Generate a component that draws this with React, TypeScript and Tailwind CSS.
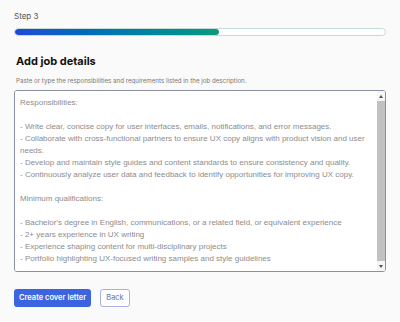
import { useState } from 'react';

const jobText = `Responsibilities:

- Write clear, concise copy for user interfaces, emails, notifications, and error messages.
- Collaborate with cross-functional partners to ensure UX copy aligns with product vision and user needs.
- Develop and maintain style guides and content standards to ensure consistency and quality.
- Continuously analyze user data and feedback to identify opportunities for improving UX copy.

Minimum qualifications:

- Bachelor's degree in English, communications, or a related field, or equivalent experience
- 2+ years experience in UX writing
- Experience shaping content for multi-disciplinary projects
- Portfolio highlighting UX-focused writing samples and style guidelines`;

function ProgressBar({ percent }: { percent: number }) {
  return (
    <div className="h-[8px] w-full rounded-full border border-[#c5dcd6] bg-white overflow-hidden">
      <div
        className="h-full rounded-full bg-gradient-to-r from-[#2146d8] to-[#0f9a7c]"
        style={{ width: `${percent}%` }}
      />
    </div>
  );
}

// classic scrollbar drawn over the textarea's right edge
function FakeScrollbar() {
  return (
    <div className="absolute right-0 top-0 bottom-0 flex w-[8px] flex-col bg-[#f5f5f5]">
      <div className="flex h-[10px] items-center justify-center">
        <div className="h-0 w-0 border-x-[2.5px] border-b-[3px] border-x-transparent border-b-[#505050]" />
      </div>
      <div className="flex-1 bg-[#c1c1c1]" />
      <div className="flex h-[10px] items-center justify-center">
        <div className="h-0 w-0 border-x-[2.5px] border-t-[3px] border-x-transparent border-t-[#505050]" />
      </div>
    </div>
  );
}

export default function App() {
  const [details, setDetails] = useState(jobText);

  return (
    <div className="min-h-[322px] w-[400px] bg-[#fafafa] px-[14px] pt-[11px] font-['Inter',sans-serif]">
      <p className="text-[8px] leading-[10px] text-[#555]">Step 3</p>

      <div className="mt-[7px]">
        <ProgressBar percent={55} />
      </div>

      <h1 className="mt-[18px] pl-[2px] text-[11px] font-bold leading-[14px] text-[#111]">
        Add job details
      </h1>
      <p className="mt-[8px] pl-[2px] text-[6.2px] leading-[9px] text-[#777]">
        Paste or type the responsibilities and requirements listed in the job description.
      </p>

      <div className="relative mt-[5px] h-[182px] overflow-hidden rounded-[3px] border border-[#8b90a0] bg-white">
        <textarea
          value={details}
          onChange={(e) => setDetails(e.target.value)}
          className="block h-full w-full resize-none overflow-hidden bg-white py-[6px] pl-[5px] pr-[12px] font-['Liberation_Sans',Arial,sans-serif] text-[8px] leading-[12px] text-[#8c8c8c] outline-none"
        />
        <FakeScrollbar />
      </div>

      <div className="mt-[17px] flex items-center gap-[9px]">
        <button
          type="button"
          className="h-[18px] rounded-[3px] bg-[#3d64e0] px-[5px] text-[7.5px] font-semibold text-white"
        >
          Create cover letter
        </button>
        <button
          type="button"
          className="h-[18px] rounded-[3px] border border-[#a8b0e4] bg-white px-[5px] text-[7.5px] text-[#6770a8]"
        >
          Back
        </button>
      </div>
    </div>
  );
}
